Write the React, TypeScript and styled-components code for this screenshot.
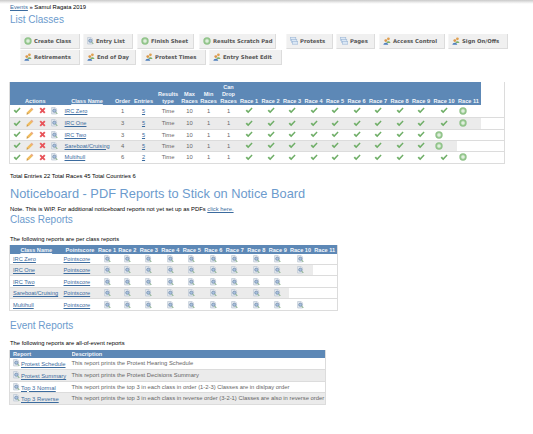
import React from "react";
import styled, { createGlobalStyle } from "styled-components";

const GlobalStyle = createGlobalStyle`
  html, body {
    margin: 0;
    padding: 0;
    background: #fff;
    font-family: "Liberation Sans", Arial, sans-serif;
    font-size: 5.85px;
    color: #000;
  }
`;

const TopBand = styled.div`
  height: 4px;
  background: linear-gradient(#c9c9c9, #f2f2f2 70%, #fff);
`;

const Page = styled.div`
  padding: 0 0 0 10px;
`;

const Crumbs = styled.div`
  height: 7px;
  line-height: 7px;
`;

const Link = styled.a`
  color: #3b6b9e;
  text-decoration: underline;
`;

const Heading = styled.h2<{ $size: number; $top: number; $bottom: number }>`
  margin: ${(p) => p.$top}px 0 ${(p) => p.$bottom}px;
  font-weight: normal;
  font-size: ${(p) => p.$size}px;
  line-height: ${(p) => Math.round(p.$size + 2)}px;
  color: #6c9bcd;
`;

const Toolbar = styled.div`
  margin-left: 10px;
  display: flex;
  flex-direction: column;
  gap: 1px;
`;

const ToolRow = styled.div`
  display: flex;
`;

const ToolButton = styled.a<{ $w: number; $mr: number }>`
  box-sizing: border-box;
  width: ${(p) => p.$w}px;
  height: 15px;
  margin-right: ${(p) => p.$mr}px;
  padding-left: 3px;
  display: flex;
  align-items: center;
  gap: 2px;
  background: #f0f0f0;
  border-right: 1px solid #dcdcdc;
  border-bottom: 1px solid #dcdcdc;
  border-left: 1px solid #f6f6f6;
  font-family: "DejaVu Sans", sans-serif;
  font-weight: bold;
  font-size: 5.3px;
  white-space: nowrap;
  overflow: hidden;
  color: #555;
`;

const Note = styled.p<{ $top: number }>`
  margin: ${(p) => p.$top}px 0 0;
  height: 7px;
  line-height: 7px;
`;

const Table = styled.table<{ $w: number; $top: number }>`
  width: ${(p) => p.$w}px;
  margin: ${(p) => p.$top}px 0 0 -1px;
  table-layout: fixed;
  border-collapse: collapse;
  border: 1px solid #dcdcdc;
  border-top: 0;
  color: #666;
`;

const HeadRow = styled.tr<{ $h: number }>`
  height: ${(p) => p.$h}px;
`;

const Head = styled.th<{ $left?: boolean; $pad?: number }>`
  padding: 0 0 0 ${(p) => p.$pad ?? 0}px;
  vertical-align: bottom;
  background: #5d88b6;
  color: #f2f6fb;
  font-weight: bold;
  font-size: 5.6px;
  line-height: 7px;
  text-align: ${(p) => (p.$left ? "left" : "center")};
  white-space: nowrap;
  overflow: hidden;
  a {
    color: inherit;
    text-decoration: underline;
  }
`;

const Row = styled.tr<{ $h: number }>`
  height: ${(p) => p.$h}px;
  border-bottom: 1px solid #dcdcdc;
  &:nth-child(even) td {
    background: #ebebeb;
  }
`;

const Cell = styled.td<{ $left?: boolean; $pad?: number; $blank?: boolean }>`
  padding: 0 0 0 ${(p) => p.$pad ?? 0}px;
  text-align: ${(p) => (p.$left ? "left" : "center")};
  white-space: nowrap;
  ${(p) => (p.$blank ? "background: #fff !important;" : "")}
  svg {
    vertical-align: middle;
  }
  a {
    font-size: 5.65px;
  }
`;

const ReportCell = styled.td`
  padding: 0 0 0 3px;
  white-space: nowrap;
  svg {
    vertical-align: -1px;
    margin-right: 1px;
  }
`;

const Check = () => (
  <svg width="8" height="7" viewBox="0 0 8 7">
    <path d="M0.6 3.8 L2 2.6 L3.1 3.9 L6.6 0.6 L7.6 1.6 L3.2 6.2 Z" fill="#6fae67" />
  </svg>
);

const Pencil = () => (
  <svg width="8" height="8" viewBox="0 0 8 8">
    <path d="M0.6 7.4 L1 5.2 L5.6 0.7 L7.3 2.4 L2.8 7 Z" fill="#efbb5f" />
    <path d="M0.6 7.4 L1 5.9 L2.1 7 Z" fill="#9a7d4f" />
    <path d="M5.6 0.7 L7.3 2.4 L6.4 3.2 L4.8 1.5 Z" fill="#e8a898" />
  </svg>
);

const Cross = () => (
  <svg width="7" height="7" viewBox="0 0 7 7">
    <path d="M1.2 1.2 L5.8 5.8 M5.8 1.2 L1.2 5.8" stroke="#e8545a" strokeWidth="1.9" />
  </svg>
);

const Lens = () => (
  <svg width="7" height="8" viewBox="0 0 7 8">
    <path d="M0.6 0.5 H4.2 L5.6 2 V7 H0.6 Z" fill="#e4e9f0" stroke="#b4bfce" strokeWidth="0.6" />
    <circle cx="3.3" cy="3.7" r="1.6" fill="#a9c2de" stroke="#6f86a6" strokeWidth="0.7" />
    <path d="M4.5 5 L6.3 6.9" stroke="#7fae78" strokeWidth="1" />
  </svg>
);

const Plus = () => (
  <svg width="8" height="8" viewBox="0 0 8 8">
    <circle cx="4" cy="4" r="3.7" fill="#8fc288" />
    <circle cx="4" cy="4" r="2.4" fill="#a8d2a2" />
    <path d="M4 2.2 V5.8 M2.2 4 H5.8" stroke="#f2f8f1" strokeWidth="1" />
  </svg>
);

const People = () => (
  <svg width="8" height="8" viewBox="0 0 8 8">
    <circle cx="5.4" cy="1.8" r="1.4" fill="#e0a050" />
    <path d="M3.4 6 C3.4 3.8 7.4 3.8 7.4 6 Z" fill="#7fb06a" />
    <circle cx="2.8" cy="3.6" r="1.4" fill="#d99648" />
    <path d="M0.4 7.8 C0.4 5 5.2 5 5.2 7.8 Z" fill="#4f7fbc" />
  </svg>
);

const Pages = () => (
  <svg width="8" height="8" viewBox="0 0 8 8">
    <rect x="0.4" y="0.6" width="5.4" height="2.6" fill="#dce8f5" stroke="#9db8d8" strokeWidth="0.6" />
    <rect x="1.4" y="2.6" width="5.4" height="2.6" fill="#dce8f5" stroke="#9db8d8" strokeWidth="0.6" />
    <rect x="2.4" y="4.6" width="5.4" height="2.6" fill="#dce8f5" stroke="#9db8d8" strokeWidth="0.6" />
  </svg>
);

const toolRows = [
  [
    { label: "Create Class", icon: <Plus />, w: 60, mr: 3 },
    { label: "Entry List", icon: <Lens />, w: 50, mr: 4 },
    { label: "Finish Sheet", icon: <Plus />, w: 57, mr: 5 },
    { label: "Results Scratch Pad", icon: <Plus />, w: 77, mr: 10 },
    { label: "Protests", icon: <Pages />, w: 47, mr: 3 },
    { label: "Pages", icon: <Pages />, w: 39, mr: 4 },
    { label: "Access Control", icon: <People />, w: 66, mr: 3 },
    { label: "Sign On/Offs", icon: <People />, w: 60, mr: 0 },
  ],
  [
    { label: "Retirements", icon: <People />, w: 60, mr: 3 },
    { label: "End of Day", icon: <People />, w: 53, mr: 5 },
    { label: "Protest Times", icon: <People />, w: 65, mr: 3 },
    { label: "Entry Sheet Edit", icon: <People />, w: 73, mr: 0 },
  ],
];

const classRows = [
  { name: "IRC Zero", order: 1, entries: 5, races: 10 },
  { name: "IRC One", order: 3, entries: 5, races: 10 },
  { name: "IRC Two", order: 3, entries: 5, races: 9 },
  { name: "Sareboat/Cruising", order: 4, entries: 5, races: 9 },
  { name: "Multihull", order: 6, entries: 2, races: 10 },
];

const raceNumbers = [1, 2, 3, 4, 5, 6, 7, 8, 9, 10, 11];
const listCols = [14, 13, 12, 12, 53, 18, 24, 25, 18, 20, 20, 21, 22, 21, 22, 21, 22, 21, 22, 21, 25, 24, 24];
const reportCols = [53, 35, 19, 21.5, 21.5, 21.5, 21.5, 21.5, 21.5, 21.5, 21.5, 24, 25];

// row heights alternate because the original rows are a fractional 11.5px
const listHeights = [12, 12, 11, 11, 12];
const reportHeights = [11, 11, 12, 11, 12];
const eventHeights = [11, 12, 11, 12];

const eventReports = [
  { name: "Protest Schedule", text: "This report prints the Protest Hearing Schedule" },
  { name: "Protest Summary", text: "This report prints the Protest Decisions Summary" },
  { name: "Top 3 Normal", text: "This report prints the top 3 in each class in order (1-2-3) Classes are in dislpay order" },
  { name: "Top 3 Reverse", text: "This report prints the top 3 in each class in reverse order (3-2-1) Classes are also in reverse order" },
];

export default function App() {
  return (
    <>
      <GlobalStyle />
      <TopBand />
      <Page>
        <Crumbs>
          <Link>Events</Link> » Samul Ragata 2019
        </Crumbs>
        <Heading $size={10} $top={3} $bottom={8}>List Classes</Heading>

        <Toolbar>
          {toolRows.map((tools, i) => (
            <ToolRow key={i}>
              {tools.map((t) => (
                <ToolButton key={t.label} $w={t.w} $mr={t.mr}>
                  {t.icon}
                  {t.label}
                </ToolButton>
              ))}
            </ToolRow>
          ))}
        </Toolbar>

        <Table $w={472} $top={17}>
          <colgroup>
            {listCols.map((w, i) => (
              <col key={i} style={{ width: w }} />
            ))}
          </colgroup>
          <thead>
            <HeadRow $h={23}>
              <Head colSpan={4}>Actions</Head>
              <Head><a>Class Name</a></Head>
              <Head>Order</Head>
              <Head>Entries</Head>
              <Head>Results<br />type</Head>
              <Head>Max<br />Races</Head>
              <Head>Min<br />Races</Head>
              <Head>Can<br />Drop<br />Races</Head>
              {raceNumbers.map((n) => (
                <Head key={n}>Race {n}</Head>
              ))}
            </HeadRow>
          </thead>
          <tbody>
            {classRows.map((r, i) => (
              <Row key={r.name} $h={listHeights[i]}>
                <Cell><Check /></Cell>
                <Cell><Pencil /></Cell>
                <Cell><Cross /></Cell>
                <Cell><Lens /></Cell>
                <Cell $left $pad={4}><Link>{r.name}</Link></Cell>
                <Cell>{r.order}</Cell>
                <Cell><Link>{r.entries}</Link></Cell>
                <Cell>Time</Cell>
                <Cell>10</Cell>
                <Cell>1</Cell>
                <Cell>1</Cell>
                {raceNumbers.map((n) => {
                  if (n <= r.races) return <Cell key={n}><Check /></Cell>;
                  if (n === r.races + 1) return <Cell key={n} $left $pad={n === 11 ? 2 : 3}><Plus /></Cell>;
                  return <Cell key={n} $blank />;
                })}
              </Row>
            ))}
          </tbody>
        </Table>

        <Note $top={9}>Total Entries 22 Total Races 45 Total Countries 6</Note>
        <Heading $size={12.8} $top={6} $bottom={5}>Noticeboard - PDF Reports to Stick on Notice Board</Heading>
        <Note $top={0}>
          Note. This is WIP. For additional noticeboard reports not yet set up as PDFs <Link>click here.</Link>
        </Note>
        <Heading $size={10} $top={1} $bottom={10}>Class Reports</Heading>
        <Note $top={0}>The following reports are per class reports</Note>

        <Table $w={329} $top={2}>
          <colgroup>
            {reportCols.map((w, i) => (
              <col key={i} style={{ width: w }} />
            ))}
          </colgroup>
          <thead>
            <HeadRow $h={9}>
              <Head><a>Class Name</a></Head>
              <Head>Pointscore</Head>
              {raceNumbers.map((n) => (
                <Head key={n}>Race {n}</Head>
              ))}
            </HeadRow>
          </thead>
          <tbody>
            {classRows.map((r, i) => (
              <Row key={r.name} $h={reportHeights[i]}>
                <Cell $left $pad={3}><Link>{r.name}</Link></Cell>
                <Cell $left $pad={1}><Link>Pointscore</Link></Cell>
                {raceNumbers.map((n) =>
                  n <= r.races ? <Cell key={n}><Lens /></Cell> : <Cell key={n} $blank />
                )}
              </Row>
            ))}
          </tbody>
        </Table>

        <Heading $size={10} $top={9} $bottom={8}>Event Reports</Heading>
        <Note $top={0}>The following reports are all-of-event reports</Note>

        <Table $w={317} $top={3}>
          <colgroup>
            <col style={{ width: 62 }} />
            <col />
          </colgroup>
          <thead>
            <HeadRow $h={8}>
              <Head $left $pad={3}>Report</Head>
              <Head $left>Description</Head>
            </HeadRow>
          </thead>
          <tbody>
            {eventReports.map((r, i) => (
              <Row key={r.name} $h={eventHeights[i]}>
                <ReportCell>
                  <Lens />
                  <Link>{r.name}</Link>
                </ReportCell>
                <Cell $left>{r.text}</Cell>
              </Row>
            ))}
          </tbody>
        </Table>
      </Page>
    </>
  );
}
